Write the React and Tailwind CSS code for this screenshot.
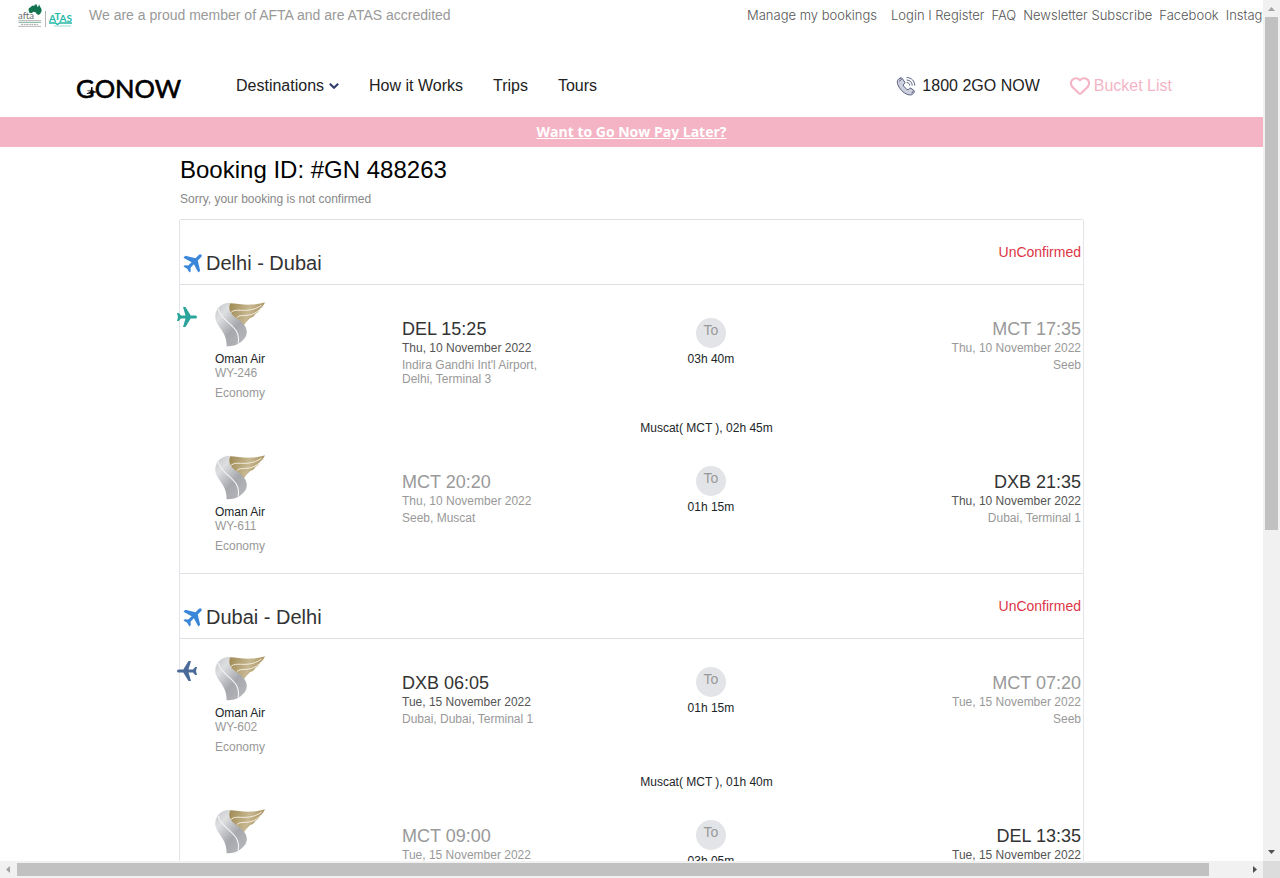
import { Heart } from "lucide-react";

const legs = [
  {
    title: "Delhi - Dubai",
    outbound: true,
    layover: "Muscat( MCT ), 02h 45m",
    segments: [
      {
        flight: "WY-246",
        duration: "03h 40m",
        twoLine: true,
        from: { time: "DEL 15:25", date: "Thu, 10 November 2022", place: "Indira Gandhi Int'l Airport, Delhi, Terminal 3" },
        to: { time: "MCT 17:35", date: "Thu, 10 November 2022", place: "Seeb", muted: true },
      },
      {
        flight: "WY-611",
        duration: "01h 15m",
        from: { time: "MCT 20:20", date: "Thu, 10 November 2022", place: "Seeb, Muscat", muted: true },
        to: { time: "DXB 21:35", date: "Thu, 10 November 2022", place: "Dubai, Terminal 1" },
      },
    ],
  },
  {
    title: "Dubai - Delhi",
    outbound: false,
    layover: "Muscat( MCT ), 01h 40m",
    segments: [
      {
        flight: "WY-602",
        duration: "01h 15m",
        from: { time: "DXB 06:05", date: "Tue, 15 November 2022", place: "Dubai, Dubai, Terminal 1" },
        to: { time: "MCT 07:20", date: "Tue, 15 November 2022", place: "Seeb", muted: true },
      },
      {
        flight: "WY-603",
        duration: "03h 05m",
        from: { time: "MCT 09:00", date: "Tue, 15 November 2022", place: "Seeb, Muscat", muted: true },
        to: { time: "DEL 13:35", date: "Tue, 15 November 2022", place: "Delhi, Terminal 3" },
      },
    ],
  },
];

const planePath =
  "M0 6h1.800l2.200 2.500h4.500L6 0h2.500l5.200 8.500h4.700a1.600 1.500 0 0 1 0 3H13.700L8.500 20H6l2.500-8.500H4L1.800 14H0l1-4z";

function AccreditationLogo() {
  return (
    <svg className="h-6 w-[54px] shrink-0" viewBox="0 0 54 24" role="img" aria-label="AFTA and ATAS">
      <path
        d="M10.500 7 11 5 13 4 14 2.500 16 3 17 1.500 19 1.500 18.800 3.300 20.300 3.800 21 1.300 22 3.500 23.500 6 23.500 8.500 22 11 20.500 12 18.800 11 17.500 9.300 15.700 8.700 13.500 10 11.500 10Z"
        fill="#11734f"
      />
      <text x="0" y="16" fontFamily="Lato, sans-serif" fontSize="9.500" fill="#6d7073">afta</text>
      <path d="M.5 17.700h22.500M.5 23.300h22.500" stroke="#a9abad" strokeWidth=".9" />
      <path d="M.5 19.400h22.500" stroke="#8dbda6" strokeWidth="1.100" />
      <path d="M3 21.400h17" stroke="#a9abad" strokeWidth="1" strokeDasharray="2 .6" />
      <path d="M27.500 8v16" stroke="#b5b5b5" strokeWidth="1" />
      <text x="31" y="18.500" fontFamily="Lato, sans-serif" fontSize="10" fontWeight="700" fill="#23b8a5">A</text>
      <text x="36.500" y="16.500" fontFamily="Lato, sans-serif" fontSize="10" fontWeight="700" fill="#23b8a5">T</text>
      <text x="41.500" y="18.500" fontFamily="Lato, sans-serif" fontSize="10" fontWeight="700" fill="#23b8a5">AS</text>
      <path d="M31 20h6.500l2 1.600 2-1.600H54" stroke="#23b8a5" strokeWidth="1.300" fill="none" />
      <path d="M36 23h17" stroke="#9bded6" strokeWidth="1" />
    </svg>
  );
}

function GoNowLogo() {
  return (
    <a href="#home" aria-label="Go Now home" className="block">
      <svg className="h-7 w-[106px] overflow-visible" viewBox="0 0 106 28" fill="#000">
        <text x="0" y="26" fontFamily="Lato, sans-serif" fontSize="25.500" stroke="#000" strokeWidth=".6">GONOW</text>
        <path d="M11 15h6.800v3.500H11z" fill="#fff" />
        <path d="M10.500 21.500 14.500 19.500l.8-4.500 1.200 0v3.900l3.500.5v1.200l-3.500.5-.5 2.400-1 .2-.3-2.200-3.500.5z" />
      </svg>
    </a>
  );
}

function PhoneIcon() {
  return (
    <svg className="h-5 w-5" viewBox="0 0 20 20" fill="none" stroke="#5b6180" strokeLinecap="round" strokeLinejoin="round">
      <path
        d="M4.300 2.200 2.300 3.300C1 4.500 1 6.500 2 9c1.500 4 5 7.600 9 9.300 2.500 1 4.600.9 5.800-.4l1.400-1.700c.4-.6.300-1.300-.2-1.700l-3-2.200c-.6-.4-1.300-.3-1.700.2l-1.200 1.400c-2.200-1-4-2.800-5-5l1.400-1.200c.5-.4.6-1.100.2-1.700L6.300 2.500c-.5-.6-1.300-.7-2-.3Z"
        fill="#cdd1df"
        strokeWidth="1"
      />
      <path d="M5.500 3.500 3.300 5.200M15.800 17l1.500-2" strokeWidth="1" />
      <path d="M11 6.500c1.600.1 2.600 1.100 2.700 2.700M11 4c3 .1 5.100 2.200 5.200 5.200M11 1.500c4.500.1 7.600 3.200 7.700 7.700" strokeWidth="1" />
    </svg>
  );
}

function OmanAirLogo() {
  return (
    <svg className="h-[45px] w-[50px]" viewBox="0 0 50 45" role="img" aria-label="Oman Air">
      <defs>
        <linearGradient id="silver" x1="0" y1="0" x2=".8" y2="1">
          <stop offset="0" stopColor="#c3c4c8" />
          <stop offset=".28" stopColor="#dedfe1" />
          <stop offset=".65" stopColor="#a7a8ad" />
          <stop offset="1" stopColor="#b5b6ba" />
        </linearGradient>
        <linearGradient id="gold" x1="0" y1="0" x2="1" y2=".2">
          <stop offset="0" stopColor="#9c8650" />
          <stop offset=".6" stopColor="#c8b891" />
          <stop offset="1" stopColor="#a8925f" />
        </linearGradient>
      </defs>
      <path d="M13.500 1.200C20 .8 27 3 36 2.600 42 2.300 46 1.500 50 .2 48.500 3.500 47 5.300 44.800 6.800 44.500 9 43 10.600 40.500 11.700c-1 2.300-2.700 3.600-5.300 4.300C33 18.500 30.500 20 28.300 24.500 25 18 12 14 13.500 1.200Z" fill="url(#gold)" />
      <path d="M15.500.8C8 .3 1 5.500.3 13.500-.5 24.500 12.500 28.500 11.500 44.300c6.500 0 11-1.300 15.500-5.300 3-2.800 4.800-5 4.800-9.500C31.300 23 26 19 20.500 15.500 15.500 12 12.500 6.500 15.500.8Z" fill="url(#silver)" />
      <path d="M3.300 6.700C4.500 16 16 20.500 21.300 29c2.400 4.300 2.700 8.500 1.900 12.700" fill="none" stroke="#f5f5f6" strokeWidth="1.100" />
      <path d="M15.500 11C19 6.500 26 9 33 8.200c6-.7 10-2.500 13.500-5M22 15.500c2-2.500 6-1.800 11-2.300 4.500-.5 8.500-2.700 11.500-5.500" fill="none" stroke="#f3eddd" strokeWidth="1" />
    </svg>
  );
}

function Endpoint({ point, alignRight }) {
  return (
    <div className={alignRight ? "pt-4 text-right" : "max-w-[150px] pt-4"}>
      <p className={point.muted ? "text-lg leading-[23px] text-[#999]" : "text-lg leading-[23px] text-[#333]"}>{point.time}</p>
      <p className={point.muted ? "leading-[14px] text-[#999]" : "leading-[14px] text-[#555]"}>{point.date}</p>
      <p className="mt-[3px] leading-[14px] text-[#999]">{point.place}</p>
    </div>
  );
}

function Segment({ segment }) {
  return (
    <div className="grid grid-cols-[187px_33fr_25fr_42fr] pl-[35px] pr-[2px] text-xs">
      <div>
        <OmanAirLogo />
        <p className="mt-[5px] leading-[14px] text-[#212529]">Oman Air</p>
        <p className="leading-[14px] text-[#999]">{segment.flight}</p>
        <p className="mt-[6px] leading-[14px] text-[#999]">Economy</p>
      </div>
      <Endpoint point={segment.from} />
      <div className={segment.twoLine ? "flex flex-col items-center pt-4" : "flex flex-col items-center pt-[11px]"}>
        <span className="h-[30px] w-[30px] rounded-full bg-[#e3e4e8] text-center text-sm leading-6 text-[#999]">To</span>
        <p className="mt-1 leading-[14px] text-[#212529]">{segment.duration}</p>
      </div>
      <Endpoint point={segment.to} alignRight />
    </div>
  );
}

function Leg({ leg }) {
  return (
    <section className="border-b border-[#dee2e6]">
      <div className="flex h-[65px] justify-between border-b border-[#dedfe5] pl-1 pr-[2px]">
        <h2 className="flex items-center gap-1 pt-[22px] text-xl text-[#333]">
          <svg className="h-[18px] w-[18px] overflow-visible" viewBox="0 0 18 18" fill="#3a87d9" aria-hidden="true">
            <path transform="translate(9.500 8.500) rotate(-45) scale(1.050) translate(-9.500 -10)" d={planePath} />
          </svg>
          {leg.title}
        </h2>
        <p className="pt-[22px] text-sm text-[#dc3545]">UnConfirmed</p>
      </div>
      <div className="relative pb-5 pt-[17px]">
        <svg
          className={
            leg.outbound
              ? "absolute -left-[3px] top-[22px] h-5 w-5 fill-[#2ba59b]"
              : "absolute -left-[3px] top-[22px] h-5 w-5 rotate-180 fill-[#4a6b97]"
          }
          viewBox="0 0 20 20"
          aria-hidden="true"
        >
          <path d={planePath} />
        </svg>
        <Segment segment={leg.segments[0]} />
        <p className="mb-5 mt-[21px] pl-[150px] text-center text-xs leading-[14px] text-[#212529]">{leg.layover}</p>
        <Segment segment={leg.segments[1]} />
      </div>
    </section>
  );
}

function VerticalScrollbar() {
  return (
    <div className="flex flex-col items-center bg-[#f1f1f1]" aria-hidden="true">
      <svg className="h-[17px] w-[17px] shrink-0" viewBox="0 0 17 17"><path d="M5 11h7L8.500 7Z" fill="#a3a3a3" /></svg>
      <div className="flex min-h-0 w-full flex-1 justify-center"><div className="h-[62%] w-[13px] bg-[#c1c1c1]" /></div>
      <svg className="h-[17px] w-[17px] shrink-0" viewBox="0 0 17 17"><path d="M5 6h7l-3.500 4Z" fill="#505050" /></svg>
    </div>
  );
}

function HorizontalScrollbar() {
  return (
    <div className="flex items-center bg-[#f1f1f1]" aria-hidden="true">
      <svg className="h-[17px] w-[17px] shrink-0" viewBox="0 0 17 17"><path d="M10 5v7L6 8.500Z" fill="#a3a3a3" /></svg>
      <div className="flex-1"><div className="h-[13px] w-[97%] bg-[#c1c1c1]" /></div>
      <svg className="h-[17px] w-[17px] shrink-0" viewBox="0 0 17 17"><path d="M7 5v7l4-3.500Z" fill="#505050" /></svg>
    </div>
  );
}

export default function App() {
  return (
    <div className="grid h-screen grid-cols-[minmax(0,1fr)_17px] grid-rows-[minmax(0,1fr)_17px] bg-white font-['Liberation_Sans',Arial,sans-serif]">
      <div className="overflow-hidden">
        <div className="flex h-[30px] items-center justify-between overflow-hidden pl-[18px]">
          <div className="flex items-center gap-[17px]">
            <AccreditationLogo />
            <p className="whitespace-nowrap text-sm text-[#999]">We are a proud member of AFTA and are ATAS accredited</p>
          </div>
          <nav aria-label="Account" className="flex w-[516px] shrink-0 gap-[7px] overflow-hidden whitespace-nowrap font-['Inter',sans-serif] text-[13px] font-light leading-5 text-[#555]">
            <a href="#bookings" className="mr-[7px]">Manage my bookings</a>
            <a href="#login">Login I Register</a>
            <a href="#faq">FAQ</a>
            <a href="#newsletter">Newsletter Subscribe</a>
            <a href="#facebook">Facebook</a>
            <a href="#instagram">Instagram</a>
          </nav>
        </div>
        <header className="flex h-[87px] items-center justify-between pl-[76px] pr-[91px] pt-[24px]">
          <div className="flex items-center gap-[54px]">
            <GoNowLogo />
            <nav aria-label="Main" className="flex items-center gap-[30px] text-base text-[#222]">
              <a href="#destinations" className="flex items-center gap-[5px]">
                Destinations
                <svg className="h-[6px] w-[10px]" viewBox="0 0 10 6" fill="none" stroke="#2b3a67" strokeWidth="2" aria-hidden="true">
                  <path d="m.8.8 4.200 4L9.200.8" />
                </svg>
              </a>
              <a href="#how">How it Works</a>
              <a href="#trips">Trips</a>
              <a href="#tours">Tours</a>
            </nav>
          </div>
          <div className="flex items-center gap-[30px] text-base">
            <a href="tel:18002466669" className="flex items-center gap-[6px] text-[#222]">
              <PhoneIcon />
              1800 2GO NOW
            </a>
            <a href="#bucket-list" className="flex items-center gap-1 text-[#f4b4c5]">
              <Heart className="h-5 w-5" viewBox="1 1.5 22 22" strokeWidth={2.3} />
              Bucket List
            </a>
          </div>
        </header>
        <div className="flex h-[30px] items-center justify-center bg-[#f4b4c5]">
          <a href="#pay-later" className="font-['Open_Sans',sans-serif] text-sm font-bold text-white underline">Want to Go Now Pay Later?</a>
        </div>
        <main className="mx-auto max-w-[905px]">
          <div className="px-px">
            <h1 className="pt-2 text-2xl leading-[30px] text-black">Booking ID: #GN 488263</h1>
            <p className="border-b border-[#dee2e6] pb-3 pt-[7px] text-xs leading-[15px] text-[#888]">Sorry, your booking is not confirmed</p>
          </div>
          <div className="border-x border-[#e3e5e8]">
            {legs.map((leg) => (
              <Leg key={leg.title} leg={leg} />
            ))}
          </div>
        </main>
      </div>
      <VerticalScrollbar />
      <HorizontalScrollbar />
      <div className="bg-[#dcdcdc]" />
    </div>
  );
}
